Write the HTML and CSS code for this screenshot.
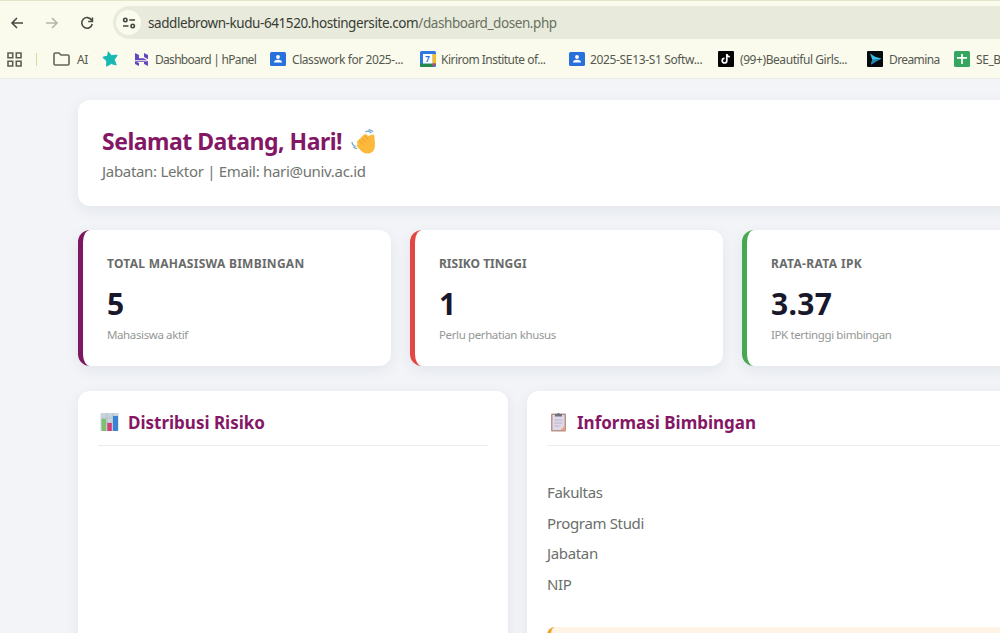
FILE: index.html
```
<!DOCTYPE html>
<html lang="id">
<head>
  <meta charset="UTF-8" />
  <title>Dashboard Dosen</title>
  <link rel="stylesheet" href="styles.css">
</head>
<body>
  <header class="browser">
    <div class="toolbar">
      <svg class="nav-icon" viewBox="0 0 16 16"><path d="M14 8H3M8 3L3 8l5 5"/></svg>
      <svg class="nav-icon disabled" viewBox="0 0 16 16"><path d="M2 8h11M8 3l5 5-5 5"/></svg>
      <svg class="nav-icon" viewBox="0 0 16 16"><path d="M12.6 5.2A5.3 5.3 0 1 0 13.2 9M13.4 2.5v4H9.2"/></svg>
      <div class="address">
        <span class="site-info">
          <svg width="14" height="14" viewBox="0 0 14 14"><circle cx="3.3" cy="4" r="1.7"/><path d="M7.3 4H13M1 10h5.5"/><circle cx="10.7" cy="10" r="1.7"/></svg>
        </span>
        <span class="url">saddlebrown-kudu-641520.hostingersite.com<span class="path">/dashboard_dosen.php</span></span>
      </div>
    </div>
    <nav class="bookmarks">
      <svg class="apps" width="15" height="15" viewBox="0 0 15 15"><path d="M1 1h4.7v4.7H1zM9.3 1H14v4.7H9.3zM1 9.3h4.7V14H1zM9.3 9.3H14V14H9.3z"/></svg>
      <span class="divider"></span>
      <span class="bookmark ai"><svg class="folder" width="17" height="14" viewBox="0 0 17 14"><path d="M1 2.2Q1 1 2.2 1H6l2 2h6.8Q16 3 16 4.2v7.6Q16 13 14.8 13H2.2Q1 13 1 11.8z"/></svg><span>AI</span></span>
      <span class="bookmark star"><svg width="16" height="16" viewBox="0 0 16 16"><path fill="#18b9b5" stroke="#18b9b5" stroke-linejoin="round" d="M6.3.8l2.9 3.7 6-.3-3 4.500 2 5.300-4.900-1.500-4.700 2.700.2-5.200L.8 6.300l4.800-1.200z"/></svg></span>
      <span class="bookmark hpanel"><svg width="15" height="15" viewBox="0 0 15 15"><path fill="#6547bd" d="M1 1l4 2v3.200h4.600L13.200 8.300H1zM10 1l4 2v4.300l-4-2.200zM1 9.200h4.600l8.400.1V14l-4-2v-1.900H2.800L5 11v3l-4-2z"/></svg><span>Dashboard | hPanel</span></span>
      <span class="bookmark classwork"><svg width="16" height="14" viewBox="0 0 16 14"><rect width="16" height="14" rx="1.500" fill="#2870dc"/><circle cx="8" cy="5" r="1.900" fill="#fff"/><path d="M4 10.500q0-2.700 4-2.700t4 2.700z" fill="#fff"/></svg><span>Classwork for 2025-...</span></span>
      <span class="bookmark kirirom"><svg width="16" height="16" viewBox="0 0 16 16"><rect width="16" height="16" rx="1.500" fill="#2f78df"/><path fill="#f9bb23" d="M12.500 3H16v9.500h-3.500z"/><path fill="#238b49" d="M0 12.500h12.500V16H1.500Q0 16 0 14.500z"/><path fill="#e24436" d="M12.500 12.500H16L12.500 16z"/><path fill="#fff" d="M3 3h9.500v9.500H3z"/><text x="5.300" y="11" class="cal-day">7</text></svg><span>Kirirom Institute of...</span></span>
      <span class="bookmark softw"><svg width="16" height="14" viewBox="0 0 16 14"><rect width="16" height="14" rx="1.500" fill="#2870dc"/><circle cx="8" cy="5" r="1.900" fill="#fff"/><path d="M4 10.500q0-2.700 4-2.700t4 2.700z" fill="#fff"/></svg><span>2025-SE13-S1 Softw...</span></span>
      <span class="bookmark tiktok"><svg width="16" height="16" viewBox="0 0 16 16"><rect width="16" height="16" rx="1" fill="#050505"/><path d="M8.800 3v6.700a2.300 2.300 0 1 1-2.300-2.300M8.800 3.200q.4 2.500 3 2.700" fill="none" stroke="#fff" stroke-width="1.700"/></svg><span>(99+)Beautiful Girls...</span></span>
      <span class="bookmark dreamina"><svg width="16" height="16" viewBox="0 0 16 16"><rect width="16" height="16" rx="1" fill="#050a0c"/><path fill="#42bfe6" d="M3 2.500l5 3.200 6.500 1.800-5.200 2.700L4 13.500l1.300-5z"/><path fill="#2186b4" d="M5.300 8.500l9.200-1-5.200 2.700L4 13.500z"/></svg><span>Dreamina</span></span>
      <span class="bookmark sheet"><svg width="16" height="16" viewBox="0 0 16 16"><rect width="16" height="16" rx="1.500" fill="#36a55d"/><path d="M8 3v10M3 6.800h10" stroke="#fff" stroke-width="1.700"/></svg><span>SE_B</span></span>
    </nav>
  </header>

  <main class="dashboard">
    <section class="welcome">
      <h1><span>Selamat Datang, Hari!</span>
        <svg width="26" height="26" viewBox="0 0 26 26">
          <path fill="#fdb93b" d="M6.500 12L13 5.500q1.500-1 2.700.2l1.500 1.300 4.200-1.500q1.800-.3 2 1.500l.6 8q.2 7-4.500 9-5 1.800-9.300-2L6 17.500q-.8-1.500.6-2.200-1.200-1.700-.1-3.300z"/>
          <path d="M8.500 12l4 3.500M11 9.500l4.200 4M14 7l3.500 3.800" fill="none" stroke="#e99a27" stroke-width=".9"/>
          <path d="M14.500 2.800q3.500-1.800 5.700 1.200M17.500 1q3-.8 4.500 2M1 13q.2 3.500 3.700 4.300M2.500 18q1.500 1.500 3.700 1.600" fill="none" stroke="#76a9c8" stroke-width="1.300"/>
        </svg>
      </h1>
      <p>Jabatan: Lektor | Email: hari@univ.ac.id</p>
    </section>

    <section class="stats">
      <div class="stat-card">
        <h3 class="label-total">TOTAL MAHASISWA BIMBINGAN</h3>
        <div class="value">5</div>
        <small>Mahasiswa aktif</small>
      </div>
      <div class="stat-card danger">
        <h3>RISIKO TINGGI</h3>
        <div class="value">1</div>
        <small>Perlu perhatian khusus</small>
      </div>
      <div class="stat-card success">
        <h3 class="label-ipk">RATA-RATA IPK</h3>
        <div class="value">3.37</div>
        <small>IPK tertinggi bimbingan</small>
      </div>
    </section>

    <section class="panels">
      <div class="panel">
        <h2>
          <svg width="19" height="20" viewBox="0 0 19 20"><rect x=".5" y="1" width="18" height="18" rx="1" fill="#c9d3dc"/><path d="M1 6h17M1 11h17M7 1v18M13 1v18" stroke="#aab8c3" stroke-width=".6"/><path fill="#7fc06c" d="M1.500 7H6v12H1.500z"/><path fill="#d33e72" d="M7.300 11h4.500v8H7.300z"/><path fill="#3c82d4" d="M13 4h5v15h-5z"/></svg>
          <span>Distribusi Risiko</span>
        </h2>
      </div>
      <div class="panel">
        <h2>
          <svg width="19" height="20" viewBox="0 0 19 20"><rect x="2" y="1.500" width="15" height="18" rx="1" fill="#b99488"/><path fill="#ded8e9" d="M3.500 3h12v15h-12z"/><path fill="#6d717b" d="M6 2h2q1.500-2 3 0h2v2.500H6z"/><path d="M5.500 8h8M5.500 11h8M5.500 14h5" stroke="#b1abc1" stroke-width=".8"/><path fill="#f3a078" d="M11.500 18l4-4v4z"/></svg>
          <span>Informasi Bimbingan</span>
        </h2>
        <ul class="info">
          <li>Fakultas</li>
          <li>Program Studi</li>
          <li>Jabatan</li>
          <li>NIP</li>
        </ul>
        <div class="notice"></div>
      </div>
    </section>
  </main>
</body>
</html>
```
FILE: styles.css
```
* {
  box-sizing: border-box;
}
body {
  margin: 0;
  height: 633px;
  overflow: hidden;
  background: #f2f4f8;
  font-family: 'Segoe UI', 'Noto Sans', 'Open Sans', sans-serif;
}
svg {
  display: block;
  flex: none;
}
.browser {
  height: 79px;
  background: #fafbed;
  border-top: 1px solid #dfe6cc;
  border-bottom: 1px solid #e9ece5;
  overflow: hidden;
}
.toolbar {
  display: flex;
  align-items: center;
  height: 33px;
  margin-top: 5px;
  padding-left: 9px;
}
.nav-icon {
  width: 16px;
  height: 16px;
  margin-right: 19px;
  fill: none;
  stroke: #484b43;
  stroke-width: 1.6;
}
.nav-icon.disabled {
  stroke: #b4b7ab;
}
.address {
  display: flex;
  align-items: center;
  flex: 1;
  height: 33px;
  margin-left: -1px;
  padding-left: 3px;
  border-radius: 17px 0 0 17px;
  background: #e8ebdc;
}
.site-info {
  display: flex;
  align-items: center;
  justify-content: center;
  width: 25px;
  height: 25px;
  border-radius: 50%;
  background: #fafbed;
}
.site-info svg {
  fill: none;
  stroke: #43463f;
  stroke-width: 1.6;
}
.url {
  margin: 1px 0 0 7px;
  color: #393c35;
  font-size: 13.5px;
  letter-spacing: -0.42px;
  white-space: nowrap;
}
.path {
  color: #697060;
}
.bookmarks {
  display: flex;
  align-items: center;
  height: 40px;
  color: #55584f;
  font-size: 12px;
  letter-spacing: -0.43px;
  white-space: nowrap;
}
.apps {
  margin-left: 7px;
  fill: none;
  stroke: #5b5e52;
  stroke-width: 1.6;
}
.divider {
  flex: none;
  width: 1px;
  height: 13px;
  margin: 0 16px 0 14px;
  background: #cbe0a0;
}
.bookmark {
  display: flex;
  flex: none;
  align-items: center;
  gap: 6px;
}
.folder {
  fill: none;
  stroke: #62655b;
  stroke-width: 1.6;
}
.ai {
  width: 49px;
  gap: 7px;
}
.star { width: 32px; }
.hpanel {
  width: 136px;
  letter-spacing: -0.7px;
}
.classwork { width: 150px; }
.kirirom {
  width: 149px;
  gap: 5px;
  letter-spacing: -0.52px;
}
.softw {
  width: 149px;
  gap: 5px;
  letter-spacing: -0.35px;
}
.tiktok { width: 149px; }
.dreamina {
  width: 87px;
  letter-spacing: -0.6px;
}
.cal-day {
  fill: #2870dc;
  font-size: 8px;
  font-weight: 700;
}
.dashboard {
  padding: 21px 0 0 78px;
}
.welcome,
.stat-card,
.panel {
  background: #fff;
  border-radius: 12px;
  box-shadow: 0 4px 14px rgba(35, 45, 65, 0.08);
}
.welcome {
  height: 106px;
  margin-right: -20px;
  padding: 25px 24px;
}
h1 {
  display: flex;
  align-items: center;
  gap: 9px;
  margin: 0;
  color: #841765;
  font-size: 23px;
  letter-spacing: -0.5px;
  line-height: 33px;
}
.welcome p {
  margin: 2px 0 0;
  color: #70756f;
  font-size: 15px;
  letter-spacing: -0.31px;
  line-height: 22px;
}
.stats {
  display: grid;
  grid-template-columns: repeat(3, 313px);
  gap: 19px;
  margin-top: 25px;
}
.welcome + .stats {
  margin-top: 24px;
}
.stat-card {
  height: 136px;
  padding: 23px 24px;
  border-left: 5px solid #7c1760;
}
.danger {
  border-left-color: #e34743;
}
.success {
  border-left-color: #46a951;
}
.stat-card h3 {
  margin: 0;
  color: #686b69;
  font-size: 12px;
  line-height: 22px;
  white-space: nowrap;
}
.stat-card .label-total {
  letter-spacing: 0.27px;
}
.stat-card .label-ipk {
  letter-spacing: 0.35px;
}
.value {
  margin-top: 9px;
  color: #18182c;
  font-size: 30px;
  font-weight: 700;
  letter-spacing: 0.3px;
  line-height: 40px;
}
.stat-card small {
  display: block;
  margin-top: 2px;
  color: #949895;
  font-size: 11.5px;
  letter-spacing: -0.38px;
  line-height: 18px;
}
.panels {
  display: grid;
  grid-template-columns: 430px 700px;
  gap: 19px;
  margin-top: 25px;
}
.panel {
  height: 300px;
  padding: 15px 20px;
}
.panel h2 {
  display: flex;
  align-items: center;
  gap: 9px;
  height: 40px;
  margin: 0 0 31px;
  padding: 0 0 7px 2px;
  border-bottom: 1px solid #eaecee;
  color: #841765;
  font-size: 17px;
}
.info {
  margin: 0;
  padding: 0;
  list-style: none;
  color: #6b6f6b;
  font-size: 15px;
  letter-spacing: -0.35px;
  line-height: 30.6px;
}
.notice {
  height: 80px;
  margin-top: 28px;
  border-left: 4px solid #f0a42e;
  border-radius: 8px;
  background: #fff3e5;
}
```
